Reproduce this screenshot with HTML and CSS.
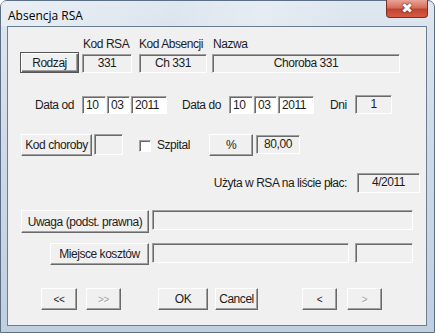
FILE: index.html
```html
<!DOCTYPE html>
<html lang="pl">
<head>
  <meta charset="UTF-8">
  <title>Absencja RSA</title>
  <link rel="stylesheet" href="styles.css">
</head>
<body>

<div class="window">
  <!-- Title bar -->
  <div class="titlebar">
    <span class="title">Absencja RSA</span>
    <span class="close-btn">&#x2716;</span>
  </div>

  <!-- Dialog body -->
  <div class="client">
    <div class="row row-labels">
      <span class="lbl lbl-rsa">Kod RSA</span>
      <span class="lbl lbl-abs">Kod Absencji</span>
      <span class="lbl lbl-nazwa">Nazwa</span>
    </div>

    <div class="row row-1">
      <button class="btn btn-default btn-rodzaj">Rodzaj</button>
      <span class="field ro f-rsa">331</span>
      <span class="field ro f-abs">Ch 331</span>
      <span class="field ro f-nazwa">Choroba 331</span>
    </div>

    <div class="row row-2">
      <span class="lbl lbl-od">Data od</span>
      <span class="field edit f-dd f-od-d">10</span>
      <span class="field edit f-mm">03</span>
      <span class="field edit f-yy">2011</span>
      <span class="lbl lbl-do">Data do</span>
      <span class="field edit f-dd f-do-d">10</span>
      <span class="field edit f-mm">03</span>
      <span class="field edit f-yy">2011</span>
      <span class="lbl lbl-dni">Dni</span>
      <span class="field ro f-dni">1</span>
    </div>

    <div class="row row-3">
      <button class="btn btn-kod">Kod choroby</button>
      <span class="field ro f-kod"></span>
      <span class="check"></span>
      <span class="lbl lbl-szpital">Szpital</span>
      <button class="btn btn-pct">%</button>
      <span class="field ro f-pct">80,00</span>
    </div>

    <div class="row row-4">
      <span class="lbl lbl-uzyta">Użyta w RSA na liście płac:</span>
      <span class="field ro f-lista">4/2011</span>
    </div>

    <div class="row row-5">
      <button class="btn btn-uwaga">Uwaga (podst. prawna)</button>
      <span class="field ro f-uwaga"></span>
    </div>

    <div class="row row-6">
      <button class="btn btn-miejsce">Miejsce kosztów</button>
      <span class="field ro f-miejsce"></span>
      <span class="field ro f-miejsce2"></span>
    </div>

    <div class="row row-7">
      <button class="btn nav btn-first">&lt;&lt;</button>
      <button class="btn nav btn-last" disabled>&gt;&gt;</button>
      <button class="btn btn-ok">OK</button>
      <button class="btn btn-cancel">Cancel</button>
      <button class="btn nav btn-prev">&lt;</button>
      <button class="btn nav btn-next" disabled>&gt;</button>
    </div>
  </div>
</div>

</body>
</html>
```

FILE: styles.css
```css
/* Vista-like dialog colours */
:root {
  --face: #f0f0f0;
  --shadow: #a0a0a0;
  --dark: #696969;
  --light: #ffffff;
  --frame-top: #dfe7f0;
  --frame-bottom: #bfcfe0;
}
html, body {
  margin: 0;
  padding: 0;
  width: 435px;
  height: 333px;
  overflow: hidden;
  font-family: "Liberation Sans", Arial, sans-serif;
  font-size: 12px;
  letter-spacing: -0.45px;
  color: #1c1c1c;
}

/* Window frame */
.window {
  width: 435px;
  height: 333px;
  box-sizing: border-box;
  border: 1px solid #5d6f84;
  border-radius: 7px 7px 0 0;
  background: linear-gradient(180deg, var(--frame-top) 0%, #cfdbe8 40%, var(--frame-bottom) 100%);
  display: flex;
  flex-direction: column;
}
.titlebar {
  height: 25px;
  display: flex;
  align-items: flex-start;
  justify-content: space-between;
  background: linear-gradient(100deg, rgba(255,255,255,0.35) 0%, rgba(255,255,255,0) 40%, rgba(255,255,255,0.25) 60%, rgba(255,255,255,0) 80%);
}
.title {
  font-family: "Open Sans", "Noto Sans", sans-serif;
  font-size: 12px;
  letter-spacing: 0;
  margin: 6px 0 0 7px;
  color: #000;
}
.close-btn {
  width: 42px;
  height: 18px;
  margin: -1px 6px 0 0;
  box-sizing: border-box;
  border: 1px solid #7a3026;
  border-top: none;
  border-radius: 0 0 4px 4px;
  background: linear-gradient(180deg, #e9a496 0%, #d66f5c 45%, #c24330 55%, #d35c43 100%);
  color: #fff;
  font-family: "DejaVu Sans", sans-serif;
  font-size: 14px;
  line-height: 17px;
  letter-spacing: 0;
  text-align: center;
  text-shadow: 0 0 2px #5a1a10, 0 0 1px #5a1a10;
}

/* Client area */
.client {
  margin: 0 7px 6px 6px;
  flex: 1;
  border: 1px solid #6d7d90;
  background: var(--face);
  display: flex;
  flex-direction: column;
}
.row {
  display: flex;
  align-items: flex-start;
}
.row-labels { margin-top: 10px; height: 14px; }
.row-1 { margin-top: 1px; height: 21px; }
.row-2 { margin-top: 22px; height: 19px; }
.row-3 { margin-top: 20px; height: 23px; }
.row-4 { margin-top: 16px; height: 20px; }
.row-5 { margin-top: 17px; height: 23px; }
.row-6 { margin-top: 10px; height: 22px; }
.row-7 { margin-top: 23px; height: 22px; }

.lbl { white-space: nowrap; line-height: 14px; }
.lbl-rsa { margin-left: 75px; width: 56px; }
.lbl-abs { width: 74px; }

/* Push buttons */
.btn {
  box-sizing: border-box;
  height: 22px;
  padding: 0;
  font: inherit;
  letter-spacing: inherit;
  color: #1c1c1c;
  background: var(--face);
  border: 1px solid;
  border-color: var(--light) var(--dark) var(--dark) var(--light);
  box-shadow: inset -1px -1px 0 var(--shadow);
  text-align: center;
}
.btn-default {
  border: 1px solid #555;
  box-shadow: inset 1px 1px 0 var(--light), inset -1px -1px 0 var(--dark), inset -2px -2px 0 var(--shadow);
}
.btn:disabled {
  color: #a0a0a0;
  text-shadow: 1px 1px 0 #fff;
}
.nav { font-size: 10px; }

/* Static / edit fields */
.field {
  box-sizing: border-box;
  height: 19px;
  border: 1px solid;
  border-color: var(--shadow) var(--light) var(--light) var(--shadow);
  box-shadow: inset 1px 1px 0 var(--dark);
  line-height: 16px;
  white-space: nowrap;
}
.ro { text-align: center; background: var(--face); }
.edit { background: #fff; padding-left: 3px; height: 18px; margin-top: 1px; }

/* Row 1 */
.btn-rodzaj { margin-left: 12px; width: 59px; height: 21px; }
.f-rsa { margin-left: 3px; width: 50px; margin-top: 2px; }
.f-abs { margin-left: 7px; width: 68px; margin-top: 2px; }
.f-nazwa { margin-left: 5px; width: 188px; margin-top: 2px; }

/* Row 2 */
.row-2 .lbl { margin-top: 3px; }
.lbl-od { margin-left: 27px; width: 47px; }
.f-dd { width: 24px; }
.f-mm { margin-left: 1px; width: 23px; }
.f-yy { margin-left: 1px; width: 36px; }
.lbl-do { margin-left: 15px; width: 47px; }
.lbl-dni { margin-left: 16px; width: 25px; }
.f-dni { width: 37px; }

/* Row 3 */
.btn-kod { margin-left: 13px; width: 71px; }
.f-kod { margin-left: 2px; width: 29px; height: 21px; }
.check {
  box-sizing: border-box;
  width: 12px;
  height: 12px;
  margin: 6px 0 0 16px;
  background: #fff;
  border: 1px solid;
  border-color: var(--shadow) var(--light) var(--light) var(--shadow);
  box-shadow: inset 1px 1px 0 var(--dark);
}
.lbl-szpital { margin: 4px 0 0 6px; width: 52px; }
.btn-pct { width: 44px; }
.f-pct { margin: 1px 0 0 3px; width: 44px; }

/* Row 4 */
.row-4 { justify-content: flex-end; }
.lbl-uzyta { margin-top: 3px; }
.f-lista { margin: 0 6px 0 10px; width: 63px; height: 20px; }

/* Row 5 and 6 */
.btn-uwaga { margin-left: 13px; width: 128px; height: 23px; }
.f-uwaga { margin-left: 3px; width: 261px; height: 20px; }
.btn-miejsce { margin-left: 42px; width: 99px; }
.f-miejsce { margin-left: 3px; width: 197px; height: 20px; }
.f-miejsce2 { margin-left: 6px; width: 58px; height: 20px; }

/* Row 7: navigation */
.btn-first { margin-left: 33px; width: 36px; }
.btn-last { margin-left: 9px; width: 35px; }
.btn-ok { margin-left: 37px; width: 50px; }
.btn-cancel { margin-left: 7px; width: 43px; }
.btn-prev { margin-left: 44px; width: 35px; }
.btn-next { margin-left: 10px; width: 35px; }
```
